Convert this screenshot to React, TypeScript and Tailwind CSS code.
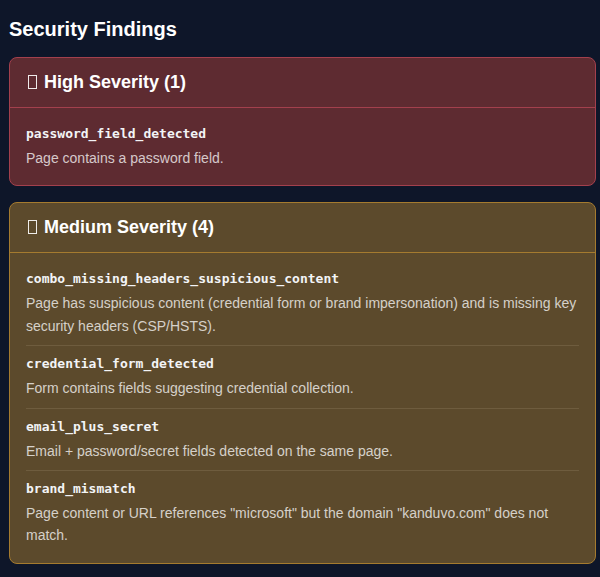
import React from "react";

type Finding = { code: string; desc: string };

const high: Finding[] = [
  { code: "password_field_detected", desc: "Page contains a password field." },
];

const medium: Finding[] = [
  {
    code: "combo_missing_headers_suspicious_content",
    desc: "Page has suspicious content (credential form or brand impersonation) and is missing key security headers (CSP/HSTS).",
  },
  { code: "credential_form_detected", desc: "Form contains fields suggesting credential collection." },
  { code: "email_plus_secret", desc: "Email + password/secret fields detected on the same page." },
  {
    code: "brand_mismatch",
    desc: 'Page content or URL references "microsoft" but the domain "kanduvo.com" does not match.',
  },
];

function Items({ items, divider }: { items: Finding[]; divider: string }) {
  return (
    <div className="px-4 py-2">
      {items.map((f, i) => (
        <div
          key={f.code}
          className={
            "py-2 " + (i < items.length - 1 ? "border-b " + divider : "")
          }
        >
          <div className="font-['DejaVu_Sans_Mono',monospace] font-bold text-[13px] leading-[20px] text-[#f3f4f6] mb-[3px]">
            {f.code}
          </div>
          <div className="text-[14px] leading-[22.4px] text-white/75">{f.desc}</div>
        </div>
      ))}
    </div>
  );
}

function Tofu() {
  return (
    <span className="inline-block w-[9px] h-[14px] border border-white/90 mr-[7px] align-[-1px]" />
  );
}

export default function App() {
  return (
    <div className="min-h-[577px] bg-[#0e1629] pl-[9px] pr-[4px] pt-[15px] pb-4 font-['Liberation_Sans',Arial,sans-serif]">
      <h2 className="text-[20px] leading-[28px] font-bold text-white mb-[14px]">Security Findings</h2>

      <div className="rounded-lg border border-[#a3404d] bg-[#5e2b31] mb-4">
        <div className="pl-[18px] pr-4 py-3 border-b border-[#a3404d] text-[18px] leading-[25px] font-bold text-white">
          <Tofu />High Severity (1)
        </div>
        <Items items={high} divider="border-[#7a3f45]" />
      </div>

      <div className="rounded-lg border border-[#a57b2f] bg-[#5c4a2c]">
        <div className="pl-[18px] pr-4 py-3 border-b border-[#a57b2f] text-[18px] leading-[25px] font-bold text-white">
          <Tofu />Medium Severity (4)
        </div>
        <Items items={medium} divider="border-[#6e5c3e]" />
      </div>
    </div>
  );
}
